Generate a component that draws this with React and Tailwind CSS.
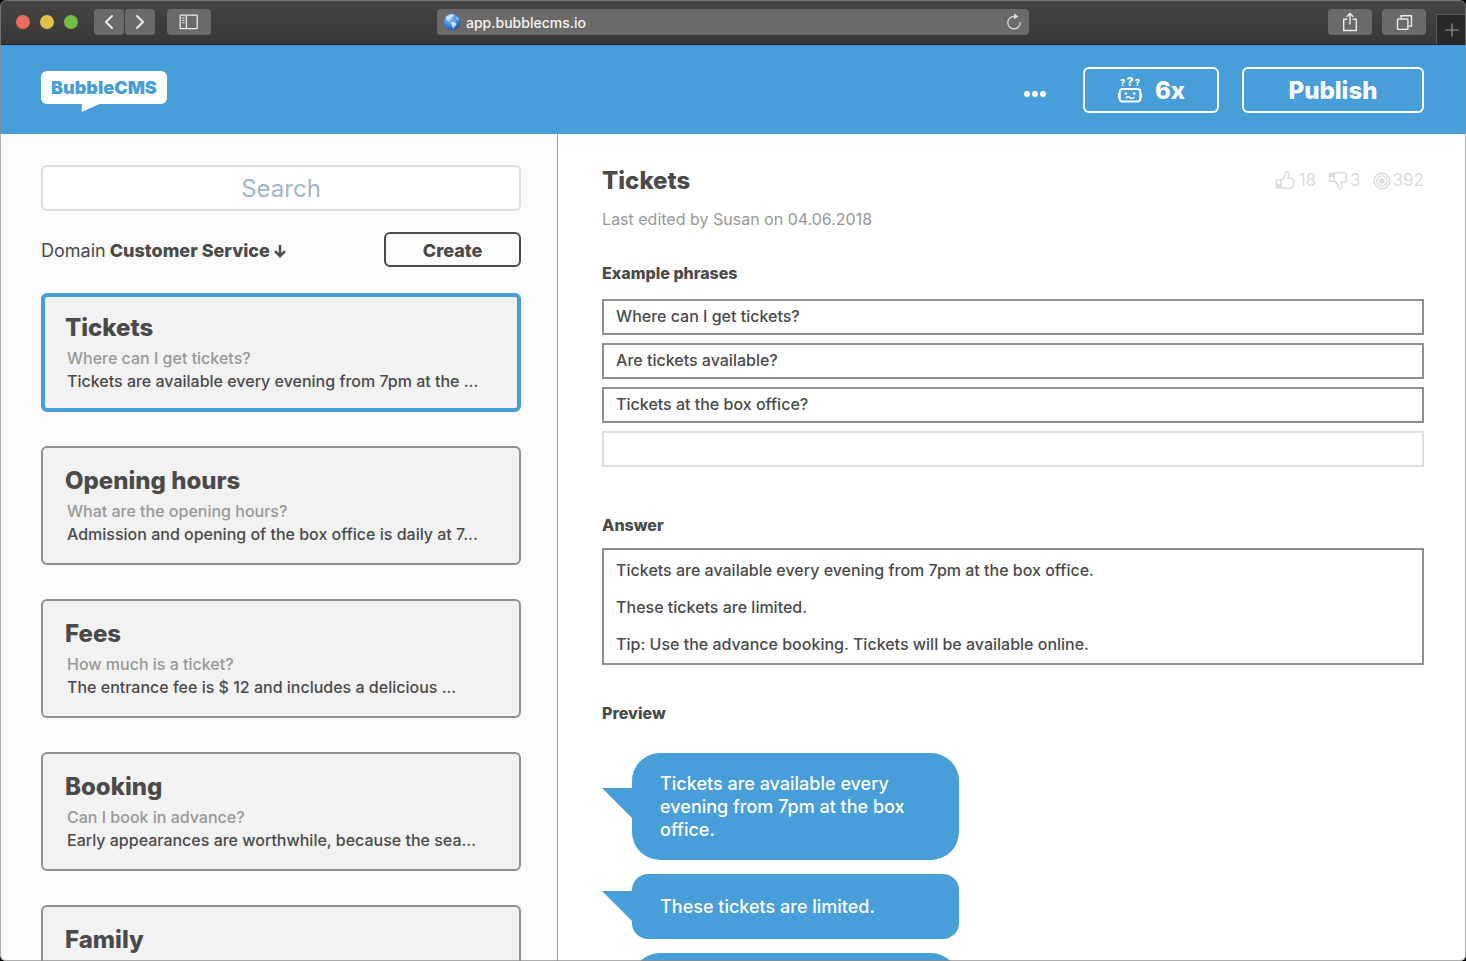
import React from "react";
import { ChevronLeft, ChevronRight } from "lucide-react";

const ENTRIES = [
  { title: "Tickets", question: "Where can I get tickets?", answer: "Tickets are available every evening from 7pm at the ..." },
  { title: "Opening hours", question: "What are the opening hours?", answer: "Admission and opening of the box office is daily at 7..." },
  { title: "Fees", question: "How much is a ticket?", answer: "The entrance fee is $ 12 and includes a delicious ..." },
  { title: "Booking", question: "Can I book in advance?", answer: "Early appearances are worthwhile, because the sea..." },
  { title: "Family" },
];

const PHRASES = ["Where can I get tickets?", "Are tickets available?", "Tickets at the box office?", ""];

const ANSWER = [
  "Tickets are available every evening from 7pm at the box office.",
  "These tickets are limited.",
  "Tip: Use the advance booking. Tickets will be available online.",
];

function ToolbarButton({ label, className, children }) {
  return (
    <button
      type="button"
      aria-label={label}
      className={`flex h-[26px] items-center justify-center rounded bg-[#6c6a69] text-[#ececec] ${className}`}
    >
      {children}
    </button>
  );
}

function BrowserBar() {
  return (
    <div className="flex h-[45px] shrink-0 items-center border-b border-[#1f1e1d] bg-linear-to-b from-[#484644] to-[#393735]">
      <div className="flex flex-1 items-center">
        <div className="ml-4 flex gap-[10px]">
          <span className="size-[14px] rounded-full bg-[#ec695e]" />
          <span className="size-[14px] rounded-full bg-[#e1c04c]" />
          <span className="size-[14px] rounded-full bg-[#72be47]" />
        </div>
        <div className="ml-4 flex gap-px">
          <ToolbarButton label="Back" className="w-[30px]">
            <ChevronLeft size={24} strokeWidth={2} />
          </ToolbarButton>
          <ToolbarButton label="Forward" className="w-[30px]">
            <ChevronRight size={24} strokeWidth={2} />
          </ToolbarButton>
        </div>
        <ToolbarButton label="Toggle sidebar" className="ml-3 w-11">
          <svg width="20" height="16" viewBox="0 0 20 16" fill="none" stroke="currentColor" strokeWidth="1.3">
            <rect x="1.2" y="1.2" width="17" height="13.4" rx="0.6" />
            <path d="M7.4 1.2v13.4" />
            <path d="M3 4h2.6M3 6.4h2.6M3 8.8h2.6" strokeWidth="1" />
          </svg>
        </ToolbarButton>
      </div>
      <div className="flex h-[26px] w-[592px] items-center rounded bg-[#6c6a69] px-1.5">
        <svg width="18" height="18" viewBox="0 0 18 18" aria-hidden="true">
          <defs>
            <radialGradient id="ocean" cx="0.4" cy="0.3" r="0.75">
              <stop offset="0" stopColor="#8cc6ff" />
              <stop offset="0.55" stopColor="#3f8fe6" />
              <stop offset="1" stopColor="#174a96" />
            </radialGradient>
          </defs>
          <circle cx="9" cy="9" r="8.3" fill="url(#ocean)" />
          <path d="M3 4.4C4.4 2.4 6.6 1.3 9 1.2l2 .7-.8 1.5-1.7.5-.6 1.6-1.8.8.3 1.4 1.3.8-.4.6-2.2-1L3.8 6.7z" fill="#d9ebf7" opacity=".85" />
          <path d="M8.3 9.2l2.4-.5 2.7 1.7-.5 2-1.7 1.2-.7 2.4-1.2-2.2-.2-1.8-1.3-1.3z" fill="#dbeaf5" opacity=".9" />
          <path d="M13.2 4.2l1.8.6 1 2-1.4.3-1.3-1.2z" fill="#b9d8f0" opacity=".8" />
        </svg>
        <input
          aria-label="Address"
          defaultValue="app.bubblecms.io"
          className="ml-[5px] min-w-0 flex-1 bg-transparent pt-[2px] text-sm font-medium text-[#f4f4f4] outline-none"
        />
        <button type="button" aria-label="Reload" className="text-[#dedede]">
          <svg width="18" height="18" viewBox="0 0 18 18" fill="none">
            <path d="M9.3 3.5A6.2 6.2 0 1 0 15.2 9.600" stroke="currentColor" strokeWidth="1.3" strokeLinecap="round" />
            <path d="M9 .6l4.6 2.9L9 6.300z" fill="currentColor" />
          </svg>
        </button>
      </div>
      <div className="flex flex-1 items-center justify-end self-stretch">
        <ToolbarButton label="Share" className="w-11">
          <svg width="16" height="20" viewBox="0 0 16 20" fill="none" stroke="currentColor" strokeWidth="1.4">
            <path d="M5.4 7.2H1.7v11.3h12.6V7.2h-3.7M8 12.6V1.8M4.7 4.8L8 1.5l3.3 3.3" />
          </svg>
        </ToolbarButton>
        <ToolbarButton label="Show tabs" className="ml-[10px] w-11">
          <svg width="17" height="17" viewBox="0 0 17 17" fill="none" stroke="currentColor" strokeWidth="1.4">
            <rect x="1.5" y="5" width="10.4" height="10.4" rx="0.8" />
            <path d="M5 4.6V1.7h10.5v10.4h-3.2" />
          </svg>
        </ToolbarButton>
        <button
          type="button"
          aria-label="New tab"
          className="ml-[10px] flex h-[30px] w-[30px] items-center justify-center self-end border-t border-l border-[#5d5b5a] bg-[#2a2827] text-[#9a9a9a]"
        >
          <svg width="14" height="14" viewBox="0 0 14 14" stroke="currentColor" strokeWidth="1.2">
            <path d="M7 .5v13M.5 7h13" />
          </svg>
        </button>
      </div>
    </div>
  );
}

function RobotIcon() {
  return (
    <svg width="26" height="28" viewBox="0 0 26 28" fill="none" stroke="currentColor" aria-hidden="true">
      <g fill="currentColor" stroke="none" textAnchor="middle" className="font-extrabold">
        <text x="5.6" y="10.4" fontSize="9">?</text>
        <text x="13" y="9.6" fontSize="12">?</text>
        <text x="20.4" y="10.4" fontSize="9">?</text>
      </g>
      <rect x="2.700" y="13" width="20.600" height="12.600" rx="3" strokeWidth="2" />
      <path d="M1.500 17.500v4.500M24.500 17.500v4.500" strokeWidth="1.200" />
      <circle cx="8.800" cy="17.600" r="1.400" fill="currentColor" stroke="none" />
      <circle cx="17.200" cy="17.600" r="1.400" fill="currentColor" stroke="none" />
      <path d="M9.200 21.600q1.900-1.500 3.800 0t3.800 0" strokeWidth="1.500" strokeLinecap="round" />
    </svg>
  );
}

function Header() {
  return (
    <header className="flex h-[89px] shrink-0 items-center bg-[#489ed8] pr-[42px] pl-[41px] text-white">
      <a href="#home" aria-label="BubbleCMS" className="mt-1 flex flex-col">
        <span className="rounded-md bg-white px-[10px] text-[18px] leading-[33px] font-black text-[#489ed8]">BubbleCMS</span>
        <svg width="22" height="9" viewBox="0 0 22 9" className="-mt-px ml-10" aria-hidden="true">
          <path d="M1 0h20L.5 9z" fill="#fff" />
        </svg>
      </a>
      <div className="ml-auto flex items-center gap-[23px]">
        <button type="button" aria-label="More" className="mt-2 mr-[14px] flex gap-[2px]">
          <span className="size-1.5 rounded-full bg-white" />
          <span className="size-1.5 rounded-full bg-white" />
          <span className="size-1.5 rounded-full bg-white" />
        </button>
        <button type="button" className="flex h-[46px] w-[136px] items-center justify-center gap-3 rounded-md border-2 border-white text-2xl font-extrabold">
          <RobotIcon />
          <span className="pt-[2px]">6x</span>
        </button>
        <button type="button" className="h-[46px] w-[182px] rounded-md border-2 border-white pt-[2px] text-2xl font-extrabold">
          Publish
        </button>
      </div>
    </header>
  );
}

function EntryCard({ entry, selected }) {
  return (
    <button
      type="button"
      aria-pressed={selected}
      className={`flex min-h-[119px] w-full flex-col rounded-md bg-[#f2f2f2] text-left ${
        selected ? "border-4 border-[#489ed8] px-5 pt-[15px] pb-[14px]" : "border-2 border-[#8f8f8f] px-[22px] pt-[17px] pb-4"
      }`}
    >
      <span className="text-2xl leading-8 font-extrabold">{entry.title}</span>
      {entry.question && (
        <span className="mt-[3px] pl-0.5 text-base leading-[23px] font-medium text-[#989898]">{entry.question}</span>
      )}
      {entry.answer && <span className="pl-0.5 text-base leading-[23px] font-medium whitespace-nowrap">{entry.answer}</span>}
    </button>
  );
}

function Sidebar() {
  return (
    <aside className="w-[38%] shrink-0 overflow-hidden bg-[#fbfbfb] pt-[31px] pr-9 pl-[41px]">
      <input
        type="text"
        aria-label="Search"
        placeholder="Search"
        className="h-[46px] w-full rounded-md border-2 border-[#dedede] bg-white text-center text-2xl outline-none placeholder:text-[#9fb7c5]"
      />
      <div className="mt-[21px] flex items-center justify-between">
        <div className="flex items-center pt-[2px] text-[18px]">
          <label htmlFor="domain">Domain</label>
          <select id="domain" className="ml-1 appearance-none bg-transparent font-extrabold outline-none">
            <option>Customer Service</option>
          </select>
          <svg width="14" height="14" viewBox="0 0 14 14" fill="none" stroke="currentColor" strokeWidth="2.4" className="ml-0.5" aria-hidden="true">
            <path d="M7 1v11M2 7.2l5 5 5-5" />
          </svg>
        </div>
        <button type="button" className="h-[35px] w-[137px] rounded-md border-2 border-[#4a4a4a] pt-[2px] text-[18px] leading-none font-extrabold">
          Create
        </button>
      </div>
      <div className="mt-[26px] flex flex-col gap-[34px]">
        {ENTRIES.map((entry, i) => (
          <EntryCard key={entry.title} entry={entry} selected={i === 0} />
        ))}
      </div>
    </aside>
  );
}

function ThumbIcon({ down }) {
  return (
    <svg width="20" height="20" viewBox="0 0 20 20" fill="none" stroke="currentColor" strokeWidth="1.5" strokeLinejoin="round" aria-hidden="true">
      {down ? (
        <>
          <path d="M6.3 2.6C9 1.2 12 1.2 15.5 1.6c1.800.3 2.600 1.300 2.700 3l.5 4.200c0 1.500-.8 2.200-2.200 2.200h-3.600l.9 4.800c0 1.400-.7 2.200-1.700 2.200-.9 0-1.300-.7-1.500-1.700-.4-2.700-1.800-4.800-4.300-6.300z" />
          <path d="M1.500 2.300h4.800v7.900H1.500z" />
          <path d="M2 3h3.800v3H2z" fill="currentColor" stroke="none" />
        </>
      ) : (
        <>
          <path d="M6.3 9c2.500-1.500 3.900-3.600 4.300-6.300.2-1 .6-1.700 1.500-1.700 1 0 1.700.8 1.700 2.200L12.900 7.600h3.600c1.400 0 2.200.7 2.200 2.200l-.5 4.600c-.1 1.700-.9 2.700-2.700 3-3.500.4-6.500.4-9.200-1z" />
          <path d="M1.500 8.800h4.800v8.200H1.500z" />
          <path d="M2 13h3.800v3.500H2z" fill="currentColor" stroke="none" />
        </>
      )}
    </svg>
  );
}

function Stats() {
  return (
    <div className="flex items-center gap-3 text-[17px] text-[#dcdcdc]">
      <span className="flex items-center gap-1"><ThumbIcon />18</span>
      <span className="flex items-center gap-0.5"><ThumbIcon down />3</span>
      <span className="flex items-center gap-0.5">
        <svg width="18" height="18" viewBox="0 0 18 18" fill="none" stroke="currentColor" aria-hidden="true">
          <circle cx="9" cy="9" r="7.800" strokeWidth="1.400" />
          <circle cx="9" cy="9" r="5.100" strokeWidth="1.400" />
          <circle cx="9" cy="9" r="2.800" fill="currentColor" stroke="none" />
        </svg>
        392
      </span>
    </div>
  );
}

function Bubble({ text, compact }) {
  return (
    <div className="flex items-start">
      <svg width="30" height="30" viewBox="0 0 30 30" className={compact ? "mt-[17px]" : "mt-[35px]"} aria-hidden="true">
        <path d="M0 0h30v30z" fill="#489ed8" />
      </svg>
      <p
        className={`w-[327px] bg-[#489ed8] pr-8 pl-7 text-[18px] leading-[23px] font-medium text-white ${
          compact ? "rounded-2xl py-[21px]" : "rounded-[28px] py-[19px]"
        }`}
      >
        {text}
      </p>
    </div>
  );
}

function Editor() {
  return (
    <main className="min-w-0 flex-1 overflow-hidden border-l border-[#9b9b9b] bg-white pt-[31px] pr-[42px] pl-11">
      <div className="flex items-center justify-between">
        <h1 className="text-2xl leading-8 font-extrabold">Tickets</h1>
        <Stats />
      </div>
      <p className="mt-[10px] text-base leading-6 text-[#989898]">Last edited by Susan on 04.06.2018</p>

      <h2 className="mt-[30px] text-base leading-6 font-extrabold">Example phrases</h2>
      <div className="mt-[14px] flex flex-col gap-2">
        {PHRASES.map((phrase, i) => (
          <input
            key={i}
            aria-label={`Example phrase ${i + 1}`}
            defaultValue={phrase}
            className={`h-9 w-full border-2 px-3 pb-[2px] text-base font-medium outline-none ${phrase ? "border-[#8f8f8f]" : "border-[#dedede]"}`}
          />
        ))}
      </div>

      <h2 className="mt-[46px] text-base leading-6 font-extrabold">
        <label htmlFor="answer">Answer</label>
      </h2>
      <textarea
        id="answer"
        rows={3}
        defaultValue={ANSWER.join("\n")}
        className="mt-[11px] block w-full resize-none overflow-hidden border-2 border-[#8f8f8f] px-3 pt-[2px] text-base leading-[37px] font-medium outline-none"
      />

      <h2 className="mt-9 text-base leading-6 font-extrabold">Preview</h2>
      <div className="mt-[28px] flex flex-col gap-[14px]">
        <Bubble text={ANSWER[0]} />
        <Bubble text={ANSWER[1]} compact />
        <Bubble text={ANSWER[2]} />
      </div>
    </main>
  );
}

export default function App() {
  return (
    <div className="h-screen bg-black">
      <div className="relative flex h-full flex-col overflow-hidden rounded-md font-[Inter,sans-serif] text-[#4a4a4a]">
        <BrowserBar />
        <Header />
        <div className="flex min-h-0 flex-1">
          <Sidebar />
          <Editor />
        </div>
        <div className="pointer-events-none absolute inset-0 rounded-md border border-[#8a8a8a]/70" />
      </div>
    </div>
  );
}
